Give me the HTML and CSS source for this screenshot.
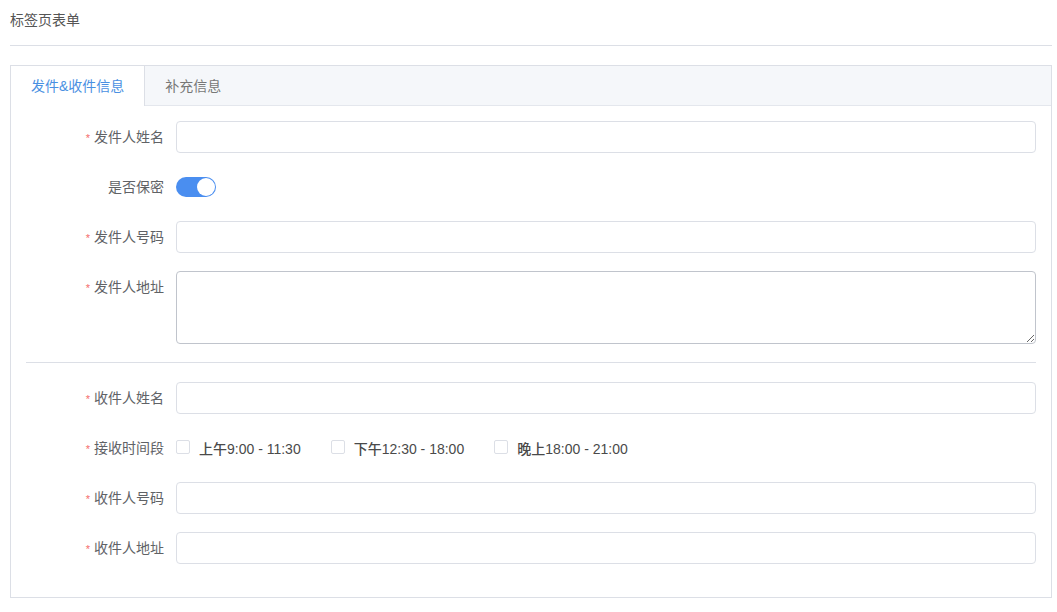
FILE: index.html
```html
<!DOCTYPE html>
<html lang="zh">
<head>
<meta charset="utf-8">
<link rel="stylesheet" href="styles.css">
</head>
<body>
<div class="page">
  <div class="title">标签页表单</div>
  <div class="card">
    <div class="tabs">
      <div class="tab active">发件&amp;收件信息</div>
      <div class="tab">补充信息</div>
    </div>
    <div class="body">
      <div class="row">
        <label class="label req">发件人姓名</label>
        <div class="ctrl"><input class="input" type="text"></div>
      </div>
      <div class="row">
        <label class="label">是否保密</label>
        <div class="ctrl"><span class="switch"><span class="knob"></span></span></div>
      </div>
      <div class="row">
        <label class="label req">发件人号码</label>
        <div class="ctrl"><input class="input" type="text"></div>
      </div>
      <div class="row tall">
        <label class="label req">发件人地址</label>
        <div class="ctrl"><textarea class="textarea"></textarea></div>
      </div>
      <div class="divider"></div>
      <div class="row">
        <label class="label req">收件人姓名</label>
        <div class="ctrl"><input class="input" type="text"></div>
      </div>
      <div class="row">
        <label class="label req">接收时间段</label>
        <div class="ctrl checks">
          <span class="check"><span class="box"></span><span class="ctext">上午9:00 - 11:30</span></span>
          <span class="check"><span class="box"></span><span class="ctext">下午12:30 - 18:00</span></span>
          <span class="check"><span class="box"></span><span class="ctext">晚上18:00 - 21:00</span></span>
        </div>
      </div>
      <div class="row">
        <label class="label req">收件人号码</label>
        <div class="ctrl"><input class="input" type="text"></div>
      </div>
      <div class="row">
        <label class="label req">收件人地址</label>
        <div class="ctrl"><input class="input" type="text"></div>
      </div>
    </div>
  </div>
</div>
</body>
</html>
```
FILE: styles.css
```css
* { box-sizing: border-box; }
html, body { margin: 0; padding: 0; background: #fff; }
body {
  font-family: "Helvetica Neue", Helvetica, "Liberation Sans", "Noto Sans CJK SC", sans-serif;
  font-size: 14px;
  color: #606266;
}
.page { padding: 10px 5px 0 10px; }
.title {
  font-size: 14px;
  line-height: 20px;
  color: #555;
  padding-bottom: 15px;
  border-bottom: 1px solid #dcdfe6;
  margin-bottom: 19px;
}
.card {
  border: 1px solid #dcdfe6;
  background: #fff;
}
.tabs {
  display: flex;
  height: 40px;
  background: #f5f7fa;
  border-bottom: 1px solid #e4e7ed;
}
.tab {
  padding: 0 20px;
  line-height: 40px;
  font-size: 14px;
  color: #777;
  border-right: 1px solid transparent;
}
.tab.active {
  background: #fff;
  color: #4a90e2;
  border-right: 1px solid #dcdfe6;
  height: 40px;
  margin-bottom: -1px;
}
.body { padding: 15px 15px 15px 15px; }
.row {
  display: flex;
  align-items: flex-start;
  height: 32px;
  margin-bottom: 18px;
}
.row.tall { height: auto; }
.label {
  width: 150px;
  flex: none;
  text-align: right;
  padding-right: 12px;
  height: 32px;
  line-height: 32px;
  font-size: 14px;
  color: #606266;
}
.label.req::before {
  content: "*";
  color: #f56c6c;
  margin-right: 4px;
  font-size: 11px;
}
.ctrl {
  flex: 1;
  min-height: 32px;
  display: flex;
  align-items: center;
}
.input {
  width: 100%;
  height: 32px;
  border: 1px solid #dcdfe6;
  border-radius: 4px;
  padding: 0 15px;
  font: inherit;
  outline: none;
  background: #fff;
}
.textarea {
  width: 100%;
  height: 73px;
  border: 1px solid #c0c4cc;
  border-radius: 4px;
  padding: 5px 15px;
  font: inherit;
  outline: none;
  resize: vertical;
  display: block;
}
.switch {
  width: 40px;
  height: 20px;
  border-radius: 10px;
  background: #4a8ef0;
  display: flex;
  align-items: center;
  justify-content: flex-end;
  padding: 0 1px;
}
.knob {
  width: 18px;
  height: 18px;
  border-radius: 50%;
  background: #fff;
}
.divider {
  height: 1px;
  background: #dcdfe6;
  margin: 0 0 19px 0;
}
.checks { gap: 30px; }
.check {
  display: inline-flex;
  align-items: center;
  gap: 9px;
}
.box {
  width: 14px;
  height: 14px;
  border: 1px solid #dcdfe6;
  border-radius: 2px;
  background: #fff;
  margin-top: -2px;
}
.ctext {
  font-size: 14px;
  color: #4a4a4a;
  font-weight: 500;
}
```
